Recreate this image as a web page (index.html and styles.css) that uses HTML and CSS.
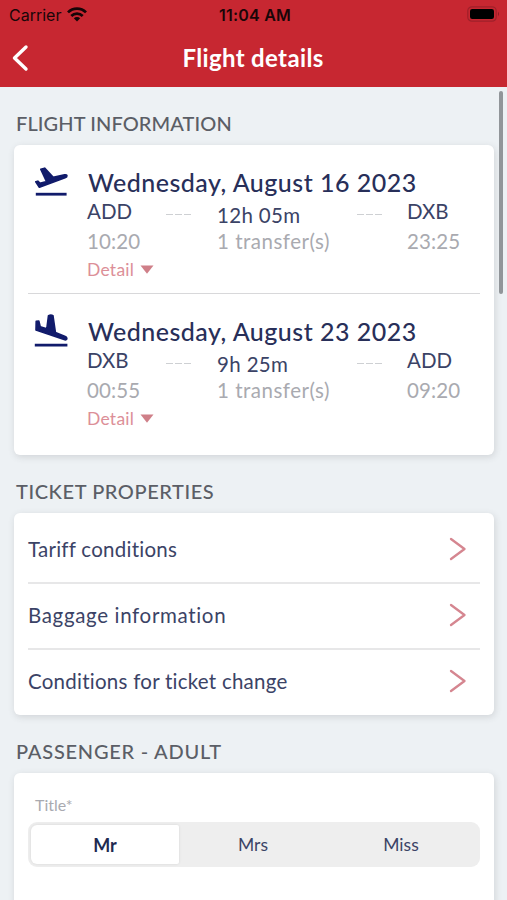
FILE: index.html
```
<!DOCTYPE html>
<html lang="en">
<head>
<meta charset="utf-8">
<meta name="viewport" content="width=device-width, initial-scale=1">
<title>Flight details</title>
<link rel="stylesheet" href="styles.css">
</head>
<body>
<header class="header">
  <div class="status">
    <div class="carrier">Carrier
      <svg class="wifi" width="20" height="15" viewBox="0 0 20 15"><g fill="none" stroke="#160507" stroke-width="2.7"><path d="M1 5.4a12.7 12.7 0 0 1 18 0"/><path d="M4.3 9a8.1 8.1 0 0 1 11.4 0"/></g><path d="M6.8 11.3a4.5 4.5 0 0 1 6.4 0L10 14.5z" fill="#160507"/></svg>
    </div>
    <div class="clock">11:04 AM</div>
    <svg class="battery" width="34" height="16" viewBox="0 0 34 16"><rect x=".8" y=".8" width="28.4" height="14.4" rx="4" fill="none" stroke="#a0202a" stroke-width="1.2"/><rect x="3" y="3" width="24" height="10" rx="2.2" fill="#000"/><path d="M31 5.8q2 2.2 0 4.4z" fill="#8d1b24"/></svg>
  </div>
  <div class="nav">
    <svg class="back" width="18" height="28" viewBox="0 0 18 28"><path d="M15 3 3.5 14 15 25" fill="none" stroke="#fff" stroke-width="3.4" stroke-linecap="round" stroke-linejoin="round"/></svg>
    <h1>Flight details</h1>
  </div>
</header>
<main class="content">
  <h2 class="heading heading-flight">FLIGHT INFORMATION</h2>
  <section class="card flights">
    <article class="flight">
      <svg class="plane" width="36" height="32" viewBox="0 0 36 32"><path d="M1.8 27.2h30.8" stroke="#111b6b" stroke-width="2.8"/><path d="M1.8 14.8 3.8 14.2 6 16.4 12.6 14.6 6.8 2.2 10.6 1.2 19.2 10.4 30.6 7.8C33.6 7.4 33.6 9.8 31 10.8L5.4 20.2z" fill="#111b6b" stroke="#111b6b" stroke-width="1.7" stroke-linejoin="round"/></svg>
      <div class="trip">
        <h3 class="date">Wednesday, August 16 2023</h3>
        <div class="route">
          <div class="stop"><b>ADD</b><span>10:20</span></div>
          <i class="dash"></i>
          <div class="stop middle"><b>12h 05m</b><span>1 transfer(s)</span></div>
          <i class="dash"></i>
          <div class="stop"><b>DXB</b><span>23:25</span></div>
        </div>
        <div class="detail">Detail<svg width="14" height="9" viewBox="0 0 14 9"><path d="M.5.5h13L7 8.7z" fill="#cf7f88"/></svg></div>
      </div>
    </article>
    <article class="flight">
      <svg class="plane landing" width="36" height="34" viewBox="0 0 36 34"><path d="M.8 31.2h32.6" stroke="#111b6b" stroke-width="2.8"/><path d="M2.2 7.4 4.8 7 6.2 12.8 12.8 14.8 14.5 1.7Q17 .6 19 1.8L21.4 18.4 31.2 22.4C33.6 23.4 33.2 26.4 30.8 25.8L2 16z" fill="#111b6b" stroke="#111b6b" stroke-width="1.6" stroke-linejoin="round"/></svg>
      <div class="trip">
        <h3 class="date">Wednesday, August 23 2023</h3>
        <div class="route">
          <div class="stop"><b>DXB</b><span>00:55</span></div>
          <i class="dash"></i>
          <div class="stop middle"><b>9h 25m</b><span>1 transfer(s)</span></div>
          <i class="dash"></i>
          <div class="stop"><b>ADD</b><span>09:20</span></div>
        </div>
        <div class="detail">Detail<svg width="14" height="9" viewBox="0 0 14 9"><path d="M.5.5h13L7 8.7z" fill="#cf7f88"/></svg></div>
      </div>
    </article>
  </section>
  <h2 class="heading heading-ticket">TICKET PROPERTIES</h2>
  <section class="card links">
    <div class="link tariff">Tariff conditions<svg width="18" height="24" viewBox="0 0 18 24"><path d="M2 2 15.5 12 2 22"/></svg></div>
    <div class="link baggage">Baggage information<svg width="18" height="24" viewBox="0 0 18 24"><path d="M2 2 15.5 12 2 22"/></svg></div>
    <div class="link change">Conditions for ticket change<svg width="18" height="24" viewBox="0 0 18 24"><path d="M2 2 15.5 12 2 22"/></svg></div>
  </section>
  <h2 class="heading heading-passenger">PASSENGER - ADULT</h2>
  <section class="card passenger">
    <div class="label">Title*</div>
    <div class="segments"><div class="segment selected">Mr</div><div class="segment">Mrs</div><div class="segment">Miss</div></div>
  </section>
</main>
<div class="scrollbar"></div>
</body>
</html>
```
FILE: styles.css
```
* { box-sizing: border-box; }
html, body { height: 100%; }
body {
  margin: 0;
  overflow: hidden;
  display: flex;
  flex-direction: column;
  background: #edf1f4;
  color: #3b4366;
  font-family: Lato, "Open Sans", sans-serif;
}
h1, h2, h3 { margin: 0; }
svg { display: block; flex: none; }

.header { flex: none; height: 87px; background: #c72731; }
.status {
  display: grid;
  grid-template-columns: 1fr auto 1fr;
  align-items: center;
  height: 30px;
  padding: 0 6px 0 9px;
  color: #190608;
  font: 16px/20px Inter, sans-serif;
}
.carrier { display: flex; align-items: center; gap: 6px; margin-top: -1px; }
.wifi { margin-top: -1px; }
.clock { font-weight: 600; letter-spacing: .2px; margin-top: -1px; }
.battery { justify-self: end; margin-top: -2px; }
.nav {
  display: grid;
  grid-template-columns: 40px 1fr 40px;
  align-items: center;
  height: 55px;
  padding: 0 12px 0 11px;
}
.nav h1 {
  color: #fff;
  font-size: 24px;
  line-height: 30px;
  font-weight: 700;
  letter-spacing: .35px;
  text-align: center;
}

.content { flex: 1; min-height: 0; padding: 0 13px 0 14px; }
.heading {
  height: 58px;
  padding: 23px 0 0 2px;
  color: #5b5e66;
  font-size: 20px;
  line-height: 27px;
  font-weight: 500;
}
.heading-flight { letter-spacing: .1px; }
.heading-ticket { letter-spacing: .58px; }
.heading-passenger { letter-spacing: .76px; }
.card {
  background: #fff;
  border-radius: 6px;
  box-shadow: 1px 2px 7px rgba(60, 65, 70, .16);
}

.flights { height: 310px; padding: 0 14px; }
.flight { display: flex; height: 149px; padding-top: 22px; }
.flight:first-child { border-bottom: 1px solid #d8d8da; }
.plane { margin-left: 6px; }
.landing { margin-top: -2px; }
.trip { margin-left: 17px; flex: 1; }
.date {
  margin-left: 1px;
  color: #282f59;
  font-size: 25px;
  line-height: 30px;
  font-weight: 500;
  letter-spacing: .48px;
}
.route {
  display: grid;
  grid-template-columns: 79px 51px 140px 50px 1fr;
  height: 60px;
  margin-top: -1px;
}
.stop { display: flex; flex-direction: column; font-size: 20.5px; }
.stop b { height: 30px; line-height: 30px; font-weight: 400; }
.stop span { color: #a9aab0; line-height: 31px; letter-spacing: .1px; }
.middle b { padding-top: 4px; letter-spacing: .35px; }
.middle span { letter-spacing: .5px; }
.dash {
  width: 25px;
  height: 1px;
  margin-top: 18px;
  background: repeating-linear-gradient(90deg, #ced0d3 0 7px, transparent 7px 9px);
}
.detail {
  display: flex;
  align-items: center;
  gap: 6px;
  height: 26px;
  color: #dc8f98;
  font-size: 17.5px;
  letter-spacing: .25px;
}

.links { height: 202px; padding: 3px 14px 0; }
.link {
  display: flex;
  align-items: center;
  justify-content: space-between;
  height: 66px;
  padding-right: 13px;
  font-size: 20.5px;
}
.link + .link { padding-bottom: 3px; border-top: 2px solid #e7e7e8; }
.link path { fill: none; stroke: #d58690; stroke-width: 2.3; stroke-linecap: round; stroke-linejoin: round; }
.tariff { letter-spacing: .25px; }
.baggage { letter-spacing: .66px; }
.change { letter-spacing: .25px; }

.passenger { height: 150px; padding: 20px 14px 0; }
.label { height: 29px; padding-left: 7px; color: #a9aab0; font-size: 16px; line-height: 23px; }
.segments {
  display: grid;
  grid-template-columns: repeat(3, 1fr);
  height: 45px;
  padding: 3px 5px 3px 3px;
  background: #eee;
  border-radius: 9px;
}
.segment { display: flex; align-items: center; justify-content: center; font-size: 17.5px; }
.selected {
  background: #fff;
  border-radius: 6px 2px 2px 6px;
  color: #202951;
  font-size: 18px;
  font-weight: 700;
  box-shadow: 0 0 3px rgba(0, 0, 0, .1);
}
.scrollbar {
  position: absolute;
  top: 91px;
  right: 4px;
  width: 4px;
  height: 203px;
  border-radius: 2px;
  background: #919599;
}
```
